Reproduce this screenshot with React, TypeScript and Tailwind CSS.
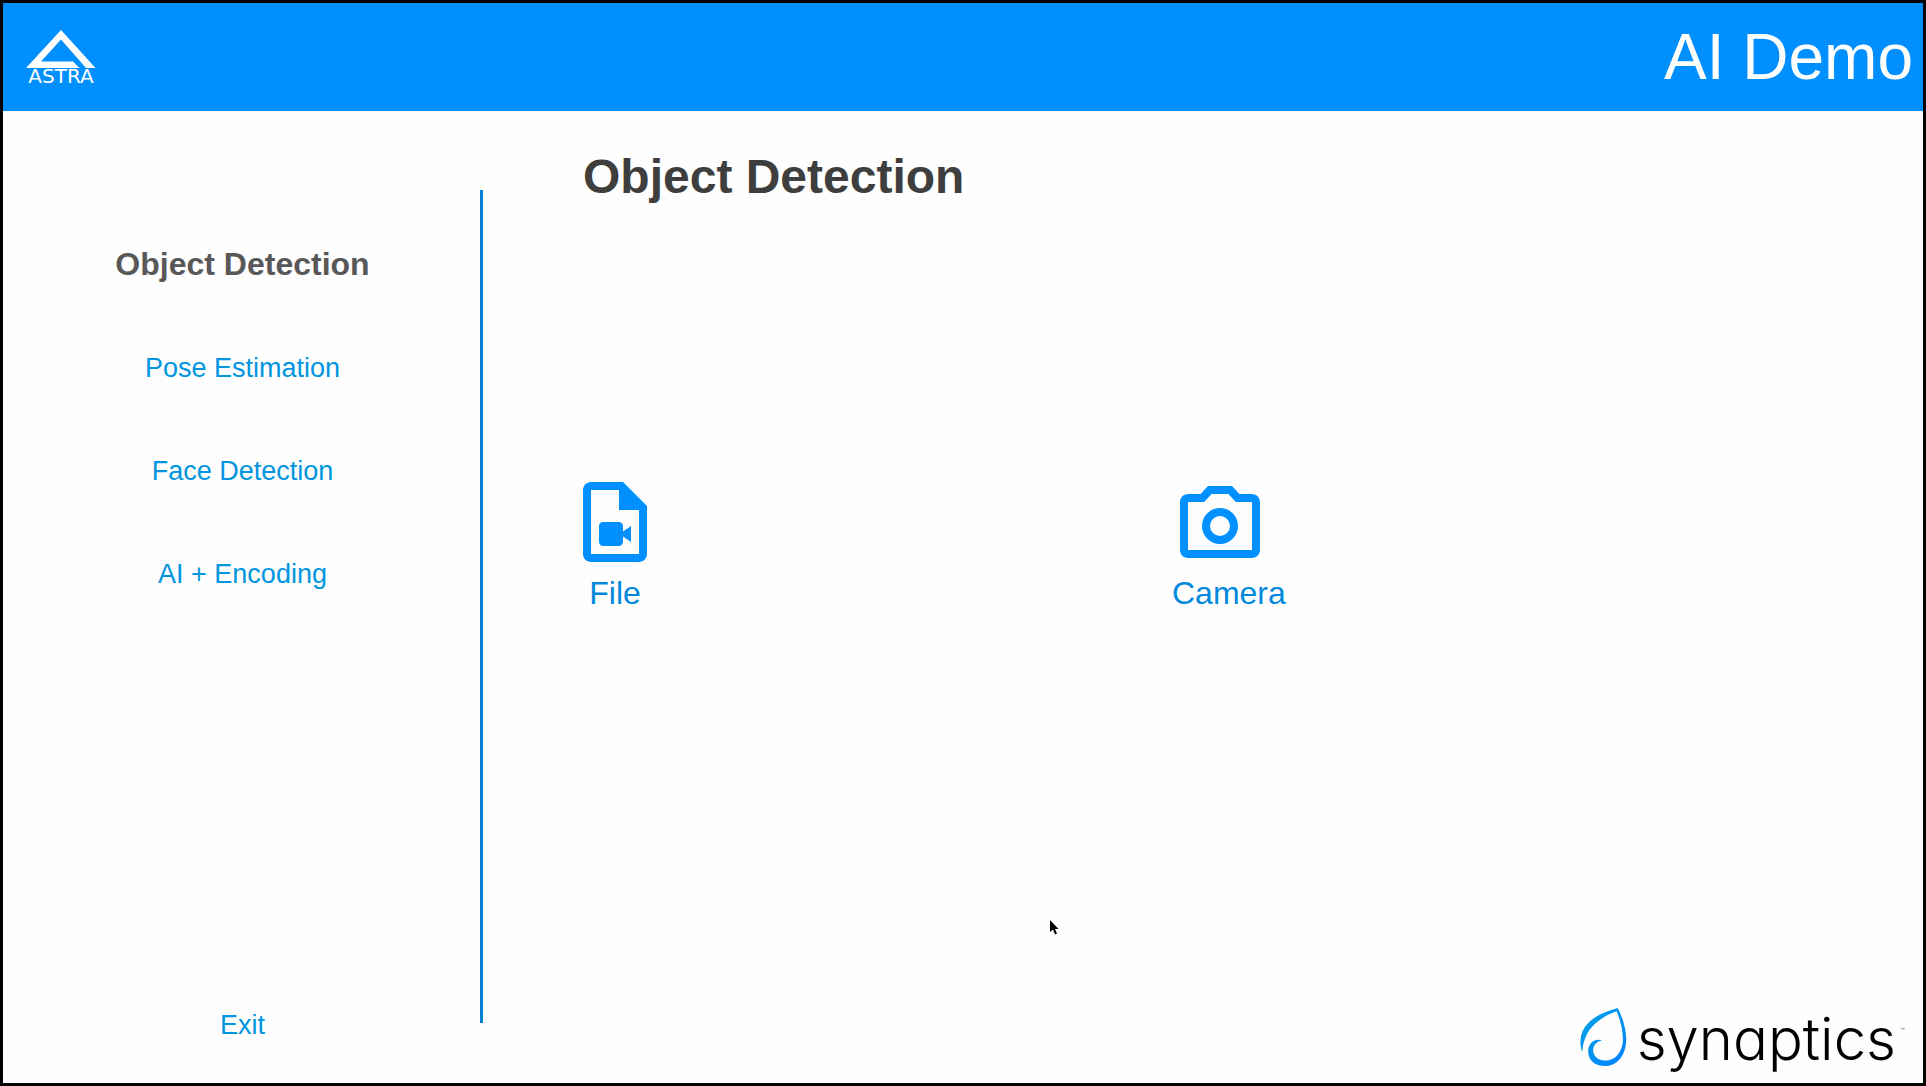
import React from "react";

const demos = ["Object Detection", "Pose Estimation", "Face Detection", "AI + Encoding"];

function AstraLogo() {
  return (
    <div className="flex w-24 flex-col items-center text-white">
      <svg viewBox="26 31 70 38" className="h-[38px] w-[70px]" fill="currentColor" aria-hidden="true">
        <path d="M61 31 26 69H79.5L73 62.5H41L61 40.5 86 69H95.5Z" />
      </svg>
      <span className="font-['DejaVu_Sans',sans-serif] text-xl leading-4">ASTRA</span>
    </div>
  );
}

function FileIcon() {
  return (
    <svg viewBox="0 0 24 24" className="size-24" fill="currentColor" aria-hidden="true">
      <path
        fillRule="evenodd"
        d="M14 2H6C4.9 2 4 2.9 4 4v16c0 1.100.900 2 2 2h12c1.100 0 2-.9 2-2V8zM6 4h7v5h5v11H6z"
      />
      <path d="M9 12h4c.55 0 1 .45 1 1v1.400l2-1.400v4l-2-1.400V17c0 .55-.45 1-1 1H9c-.55 0-1-.45-1-1v-4c0-.55.45-1 1-1z" />
    </svg>
  );
}

function CameraIcon() {
  return (
    <svg viewBox="0 0 24 24" className="size-24" fill="currentColor" aria-hidden="true">
      <path
        fillRule="evenodd"
        d="M9 3 7.170 5H4c-1.100 0-2 .9-2 2v12c0 1.100.9 2 2 2h16c1.100 0 2-.9 2-2V7c0-1.100-.9-2-2-2h-3.170L15 3zM4 7h4.050l1.830-2h4.240l1.830 2H20v12H4z"
      />
      <circle cx="12" cy="13" r="3.500" fill="none" stroke="currentColor" strokeWidth="2" />
    </svg>
  );
}

function SynapticsLogo() {
  return (
    <div className="flex items-start text-black">
      <svg viewBox="54 52 146 181" className="mr-2.5 h-[60px] w-12" aria-hidden="true">
        <defs>
          <linearGradient id="drop" x1="0" y1="0" x2="1" y2="1">
            <stop offset="0" stopColor="#00a4e4" />
            <stop offset="1" stopColor="#0082ff" />
          </linearGradient>
        </defs>
        <path
          fill="url(#drop)"
          d="M172 54C190 90 200 130 197 160 193 205 165 231 133 231 100 231 80 210 82 182 84 158 105 146 124 153 108 155 96 168 97 185 99 205 118 215 138 214 165 212 183 190 187 160 190 130 180 90 168 64 130 78 98 100 80 130 70 148 64 170 64 188 56 170 55 140 70 115 92 82 130 65 172 54Z"
        />
      </svg>
      <span className="font-[Inter,sans-serif] text-[58px] leading-[64px] font-light [font-feature-settings:'cv11']">
        synaptics
      </span>
      <span className="mt-5 ml-1 font-['Liberation_Sans',sans-serif] text-[5px] leading-none text-gray-500">™</span>
    </div>
  );
}

function SourceButton({ label, children }: { label: string; children: React.ReactNode }) {
  return (
    <button type="button" className="flex w-24 flex-col gap-[5px] text-[#0090ff]">
      {children}
      <span className="w-full text-center text-[32px] leading-9 whitespace-nowrap text-[#0088dc]">{label}</span>
    </button>
  );
}

export default function App() {
  return (
    <div className="relative flex min-h-screen flex-col border-[3px] border-black bg-[#fefefe] font-['Liberation_Sans',Arial,sans-serif]">
      <header className="flex h-[108px] items-center justify-between bg-[#008fff] px-2.5">
        <AstraLogo />
        <span className="text-[64px] leading-none text-white">AI Demo</span>
      </header>

      <div className="flex flex-1">
        <aside className="flex w-1/4">
          <nav className="flex flex-1 flex-col items-center gap-[63px] pt-[133px] pb-[39px] pl-0.5">
            {demos.map((demo, i) => (
              <button
                key={demo}
                type="button"
                className={
                  i === 0
                    ? "h-10 text-[32px] leading-10 font-bold text-[#585858]"
                    : "h-10 text-[27px] leading-[42px] text-[#0095e0]"
                }
              >
                {demo}
              </button>
            ))}
            <button type="button" className="mt-auto h-10 text-[27px] leading-[42px] text-[#0095e0]">
              Exit
            </button>
          </nav>
          <div className="mt-[79px] mb-[60px] w-[3px] bg-[#007fd6]" />
        </aside>

        <main className="flex flex-1 flex-col pt-[38px]">
          <h1 className="ml-[100px] text-[48px] leading-[56px] font-bold text-[#3e3e3e]">Object Detection</h1>
          <div className="mt-[269px] grid grid-cols-2 pr-[146px] pl-[84px]">
            <SourceButton label="File">
              <FileIcon />
            </SourceButton>
            <SourceButton label="Camera">
              <CameraIcon />
            </SourceButton>
          </div>
          <div className="mt-auto flex justify-end pr-[18px] pb-3">
            <SynapticsLogo />
          </div>
        </main>
      </div>

      <svg viewBox="0 0 10 16" className="absolute top-[917px] left-[1047px] h-4 w-2.5" aria-hidden="true">
        <path d="M0 0V12L3 9.500 5 14.500 7 13.500 5 9H8.500Z" fill="#000" />
      </svg>
    </div>
  );
}
